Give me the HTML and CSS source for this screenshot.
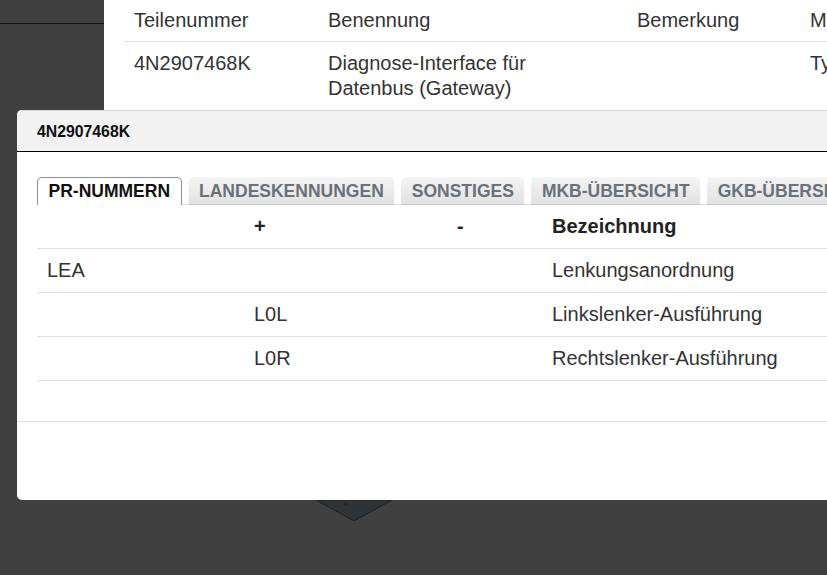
FILE: index.html
```html
<!DOCTYPE html>
<html lang="de">
<head>
<meta charset="utf-8">
<title>4N2907468K</title>
<link rel="stylesheet" href="styles.css">
</head>
<body>
<div class="page">
  <aside class="side">
    <div class="side-bar"></div>
  </aside>
  <main class="content">
    <table class="parts">
      <colgroup>
        <col class="c1"><col class="c2"><col class="c3"><col class="c4">
      </colgroup>
      <thead>
        <tr><th>Teilenummer</th><th>Benennung</th><th>Bemerkung</th><th>Menge</th></tr>
      </thead>
      <tbody>
        <tr><td>4N2907468K</td><td>Diagnose-Interface für<br>Datenbus (Gateway)</td><td></td><td>Typ</td></tr>
      </tbody>
    </table>
  </main>
</div>

<svg class="marker" width="80" height="24" viewBox="0 0 80 24" aria-hidden="true">
  <polygon points="0,0 76,0 38,21" fill="#2f3336" stroke="#1e2022" stroke-width="1"/>
  <circle cx="30" cy="4" r="2" fill="#24272a"/>
</svg>

<div class="modal">
  <header class="modal-head">
    <h1 class="modal-title">4N2907468K</h1>
  </header>
  <section class="modal-body">
    <nav class="tabs">
      <span class="tab active">PR-NUMMERN</span>
      <span class="tab">LANDESKENNUNGEN</span>
      <span class="tab">SONSTIGES</span>
      <span class="tab">MKB-ÜBERSICHT</span>
      <span class="tab">GKB-ÜBERSICHT</span>
    </nav>
    <table class="pr">
      <colgroup>
        <col class="p1"><col class="p2"><col class="p3"><col class="p4">
      </colgroup>
      <thead>
        <tr><th></th><th>+</th><th>-</th><th>Bezeichnung</th></tr>
      </thead>
      <tbody>
        <tr><td>LEA</td><td></td><td></td><td>Lenkungsanordnung</td></tr>
        <tr><td></td><td>L0L</td><td></td><td>Linkslenker-Ausführung</td></tr>
        <tr><td></td><td>L0R</td><td></td><td>Rechtslenker-Ausführung</td></tr>
      </tbody>
    </table>
  </section>
  <footer class="modal-foot"></footer>
</div>
</body>
</html>
```

FILE: styles.css
```css
html, body {
  margin: 0;
  padding: 0;
}
body {
  width: 827px;
  height: 575px;
  overflow: hidden;
  background: #404040;
  font-family: "Liberation Sans", Arial, sans-serif;
  color: #333;
  position: relative;
}

.page {
  display: flex;
  align-items: flex-start;
}
.side {
  width: 104px;
  flex: none;
}
.side-bar {
  height: 23px;
  border-bottom: 1px solid #161616;
}
.content {
  flex: 1;
  background: #fff;
  padding-left: 20px;
  height: 110px;
  overflow: hidden;
  white-space: nowrap;
}

.parts {
  border-collapse: collapse;
  table-layout: fixed;
  width: 740px;
  font-size: 20px;
  line-height: 25px;
}
.parts .c1 { width: 194px; }
.parts .c2 { width: 309px; }
.parts .c3 { width: 173px; }
.parts .c4 { width: 64px; }
.parts th, .parts td {
  text-align: left;
  font-weight: normal;
  vertical-align: top;
  overflow: hidden;
  border-bottom: 1px solid #dcdfe3;
}
.parts th {
  padding: 8px 10px 8px 10px;
}
.parts td {
  padding: 9px 10px 9px 10px;
}

.marker {
  position: absolute;
  left: 316px;
  top: 500px;
}

.modal {
  position: absolute;
  left: 17px;
  top: 110px;
  width: 880px;
  height: 390px;
  background: #fff;
  border-radius: 5px 0 0 5px;
  overflow: hidden;
}
.modal-head {
  background: #f2f2f2;
  border-top: 1px solid #d8d8d8;
  border-bottom: 1px solid #000;
  box-sizing: border-box;
  height: 42px;
  display: flex;
  align-items: center;
  padding: 0 20px;
}
.modal-title {
  margin: 0;
  font-size: 15.8px;
  font-weight: bold;
  color: #111;
  padding-top: 1px;
}
.modal-body {
  padding: 25px 20px 40px 20px;
  border-bottom: 1px solid #dcdfe3;
}

.tabs {
  display: flex;
  gap: 7px;
  border-bottom: 1px solid #dcdfe3;
  white-space: nowrap;
}
.tab {
  flex: none;
  height: 27px;
  line-height: 28px;
  padding: 0 10.5px;
  font-size: 17.5px;
  font-weight: bold;
  color: #6b7179;
  background: linear-gradient(#f4f4f4, #e2e2e2);
  border-radius: 5px 5px 0 0;
  box-shadow: 0 1px 1px rgba(0,0,0,0.12);
}
.tab.active {
  color: #111;
  background: #fff;
  border: 1px solid #8e8e8e;
  border-bottom: none;
  line-height: 27px;
  box-shadow: none;
  margin-bottom: -1px;
}

.pr {
  border-collapse: collapse;
  table-layout: fixed;
  width: 840px;
  font-size: 20px;
  line-height: 25px;
}
.pr .p1 { width: 207px; }
.pr .p2 { width: 203px; }
.pr .p3 { width: 95px; }
.pr .p4 { width: 335px; }
.pr th, .pr td {
  text-align: left;
  padding: 9px 10px;
  border-bottom: 1px solid #dcdfe3;
  height: 25px;
  white-space: nowrap;
}
.pr th {
  font-weight: bold;
  color: #222;
}
.pr td {
  color: #333;
}
```
